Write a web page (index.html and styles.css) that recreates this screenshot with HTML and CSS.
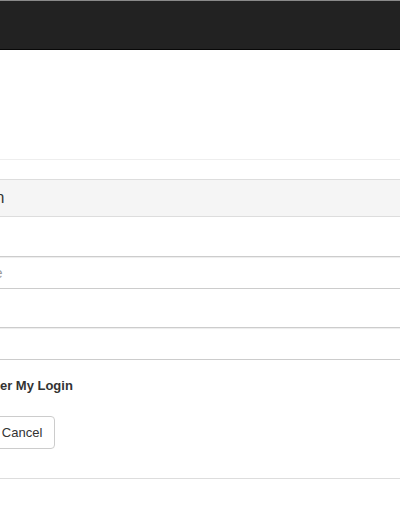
FILE: index.html
```html
<!DOCTYPE html>
<html lang="en">
<head>
<meta charset="utf-8">
<title>User Login</title>
<link rel="stylesheet" href="styles.css">
</head>
<body>
<div class="navbar"></div>
<div class="page">
  <div class="page-header"></div>
  <div class="panel">
    <div class="panel-heading"><h3 class="panel-title">User Login</h3></div>
    <div class="panel-body">
      <form class="login-form">
        <div class="form-group">
          <label class="control-label" for="username">Username:</label>
          <input id="username" class="form-control" type="text" placeholder="Username">
        </div>
        <div class="form-group">
          <label class="control-label" for="password">Password:</label>
          <input id="password" class="form-control" type="password">
        </div>
        <div class="checkbox">
          <label class="check-label"><input type="checkbox" class="check-box"><span>Remember My Login</span></label>
        </div>
        <div class="actions">
          <button type="button" class="btn btn-primary">Login</button>
          <button type="button" class="btn btn-default">Cancel</button>
        </div>
      </form>
    </div>
  </div>
</div>
</body>
</html>
```
FILE: styles.css
```css
html, body {
  margin: 0;
  padding: 0;
}
body {
  overflow: hidden;
  background: #fff;
  color: #333;
  font-family: "Liberation Sans", Arial, sans-serif;
  font-size: 13px;
  line-height: 1.42857;
}
.navbar {
  height: 48px;
  background: #222;
  border-top: 1px solid #8a8a8a;
  border-bottom: 1px solid #080808;
}
.page {
  margin-left: -91px;
  width: 760px;
}
.page-header {
  height: 109px;
  border-bottom: 1px solid #eee;
}
.panel {
  margin-top: 19px;
  border: 1px solid #ddd;
  background: #fff;
}
.panel-heading {
  height: 36px;
  display: flex;
  align-items: center;
  padding: 0 15px 0 17px;
  background: #f5f5f5;
  border-bottom: 1px solid #ddd;
}
.panel-title {
  margin: 0;
  font-size: 16px;
  font-weight: normal;
  color: #333;
}
.panel-body {
  padding: 15px 15px 29px;
}
.login-form {
  display: flex;
  flex-direction: column;
}
.form-group {
  margin-bottom: 14px;
}
.control-label {
  display: block;
  line-height: 19px;
  margin-bottom: 5px;
  font-weight: bold;
}
.form-control {
  display: block;
  box-sizing: border-box;
  width: 100%;
  height: 33px;
  margin: 0;
  padding: 0 12px;
  font-family: "Liberation Sans", Arial, sans-serif;
  font-size: 14px;
  color: #555;
  background: #fff;
  border: 1px solid #ccc;
  border-radius: 0;
  box-shadow: inset 0 1px 1px rgba(0, 0, 0, 0.075);
  outline: none;
}
.form-control::placeholder {
  color: #999;
}
.checkbox {
  height: 20px;
  margin-top: 2px;
}
.check-label {
  display: flex;
  align-items: center;
  gap: 7px;
  line-height: 20px;
  font-weight: bold;
}
.check-box {
  width: 13px;
  height: 13px;
  margin: 0;
}
.actions {
  display: flex;
  gap: 6px;
  margin-top: 20px;
}
.btn {
  box-sizing: border-box;
  height: 33px;
  margin: 0;
  padding: 0 12px;
  font-family: "Liberation Sans", Arial, sans-serif;
  font-size: 13px;
  border: 1px solid #ccc;
  border-radius: 4px;
  background: #fff;
  color: #333;
}
.btn-primary {
  background: #337ab7;
  border-color: #2e6da4;
  color: #fff;
}
```
